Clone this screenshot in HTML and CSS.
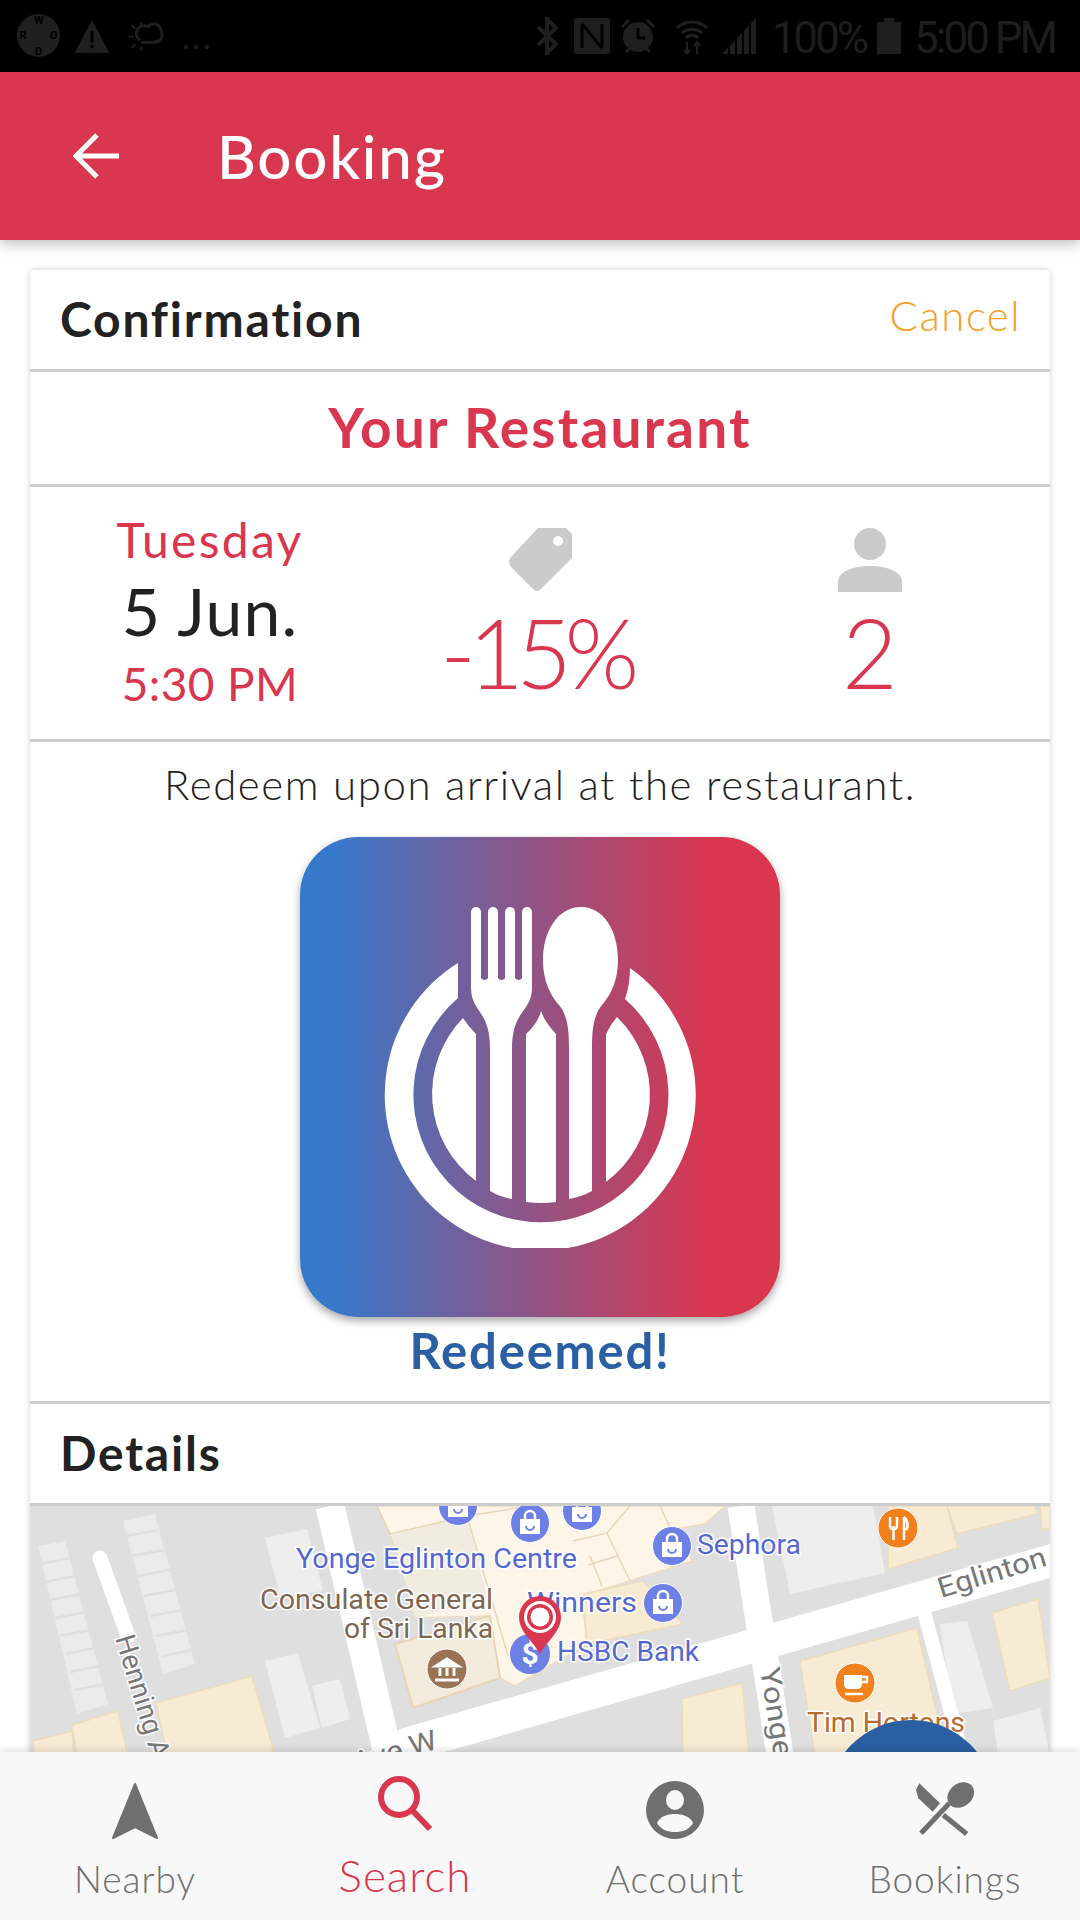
FILE: index.html
```html
<!DOCTYPE html>
<html lang="en">
<head>
<meta charset="utf-8">
<title>Booking</title>
<link rel="stylesheet" href="styles.css">
</head>
<body>
<div class="phone">
  <div class="status">
    <div class="status-group">
      <div class="word-badge"><span>W</span><span>O</span><span>R</span><span>D</span></div>
      <svg class="s-warn" viewBox="0 0 36 34"><path d="M18 0 36 34H0Z" fill="#1f1f1f"/><rect x="16.500" y="11" width="3" height="12" fill="#000"/><rect x="16.500" y="26" width="3" height="3" fill="#000"/></svg>
      <svg class="s-cloud" viewBox="0 0 40 32"><path d="M13 20a8 8 0 0 1 8-14 8 8 0 0 1 14 5c2 8-3 11-9 11H14" fill="none" stroke="#1f1f1f" stroke-width="3"/><path d="M6 16H1M8 8 4 4M8 24l-4 4M14 26v5M14 5V1" stroke="#1f1f1f" stroke-width="2"/></svg>
      <span class="s-dots">...</span>
    </div>
    <div class="status-group right">
      <svg class="s-bt" viewBox="0 0 22 38"><path d="M2 10 20 27 11 36V2l9 9L2 28" fill="none" stroke="#1f1f1f" stroke-width="4"/></svg>
      <svg class="s-nfc" viewBox="0 0 36 36"><rect width="36" height="36" rx="3" fill="#1f1f1f"/><path d="M8 6v24M8 6l20 24M28 6v24" stroke="#000" stroke-width="3" fill="none"/></svg>
      <svg class="s-alarm" viewBox="0 0 36 36"><circle cx="18" cy="19" r="15" fill="#1f1f1f"/><path d="M18 10v10h7" stroke="#000" stroke-width="3" fill="none"/><path d="M2 9 9 2M34 9 27 2M6 34l4-4M30 34l-4-4" stroke="#1f1f1f" stroke-width="3"/></svg>
      <svg class="s-wifi" viewBox="0 0 32 36"><path d="M1 10a22 22 0 0 1 30 0M6 15a15 15 0 0 1 20 0M10 20a8 8 0 0 1 12 0" fill="none" stroke="#1f1f1f" stroke-width="3"/><path d="M11 24v12M8 32l3 4 3-4M21 36V24M18 28l3-4 3 4" fill="none" stroke="#1f1f1f" stroke-width="2"/></svg>
      <svg class="s-signal" viewBox="0 0 34 36"><path d="M0 36 34 0v36Z" fill="#1f1f1f"/><path d="M7 36V26M14 36V18M21 36V10M28 36V2" stroke="#000" stroke-width="2"/></svg>
      <span class="s-text pct">100%</span>
      <svg class="s-batt" viewBox="0 0 24 36"><path d="M0 4h7V0h10v4h7v32H0Z" fill="#1f1f1f"/></svg>
      <span class="s-text clock">5:00 PM</span>
    </div>
  </div>

  <header class="appbar">
    <svg class="back" viewBox="0 0 48 48"><path d="M46 24H4M24 3 3 24l21 21" fill="none" stroke="#fff" stroke-width="5"/></svg>
    <h1 class="title">Booking</h1>
  </header>

  <main class="content">
    <section class="card">
      <div class="row row-head">
        <h2 class="heading">Confirmation</h2>
        <span class="cancel">Cancel</span>
      </div>
      <div class="row row-name">
        <h2 class="restaurant">Your Restaurant</h2>
      </div>
      <div class="row row-info">
        <div class="when">
          <div class="day">Tuesday</div>
          <div class="date">5 Jun.</div>
          <div class="time">5:30 PM</div>
        </div>
        <div class="stat stat-discount">
          <svg class="stat-icon" viewBox="0 0 64 64"><path fill-rule="evenodd" d="M30 0H58L64 6V30L32 62Q29 64 26 62L2 38Q0 34 2 30ZM50 8a5 5 0 1 0 .1 0Z" fill="#cbcbcb"/></svg>
          <div class="stat-value">-15%</div>
        </div>
        <div class="stat stat-people">
          <svg class="stat-icon" viewBox="0 0 64 64"><ellipse cx="32" cy="16" rx="16" ry="16" fill="#cbcbcb"/><path d="M0 64V54C0 43 16 38 32 38S64 43 64 54V64Z" fill="#cbcbcb"/></svg>
          <div class="stat-value">2</div>
        </div>
      </div>
      <div class="row row-redeem">
        <p class="redeem-note">Redeem upon arrival at the restaurant.</p>
        <div class="logo">
          <svg class="logo-art" viewBox="0 0 480 480">
            <defs><clipPath id="plate-clip"><rect width="480" height="411"/></clipPath></defs>
            <g fill="#fff" clip-path="url(#plate-clip)">
              <path d="M158 126A155.500 155.500 0 1 0 330 131Q330 148 325 162A127.500 127.500 0 1 1 158 161Z"/>
              <path d="M163 181Q168 189 176 197V344A108.500 108.500 0 0 1 163 181Z"/>
              <path d="M241 174Q244 184 256 197V365Q241 367 226 365V197Q238 186 241 174Z"/>
              <path d="M317 180Q310 188 306 197V345A108.500 108.500 0 0 0 317 180Z"/>
              <path d="M171 75a5 5 0 0 1 10 0V141a4 4 0 0 0 7 0V75a5 5 0 0 1 10 0V141a4 4 0 0 0 7 0V75a5 5 0 0 1 10 0V141a4 4 0 0 0 7 0V75a5 5 0 0 1 10 0V150C232 176 212 172 212 212V362Q200 360 190 354V212C190 172 171 176 171 150Z"/>
              <path d="M281 70C304 70 318 94 318 123C318 146 309 160 302 168C294 178 292 190 292 212V354Q281 360 269 362V212C269 190 267 178 259 168C252 160 243 146 243 123C243 94 258 70 281 70Z"/>
            </g>
          </svg>
        </div>
        <div class="redeemed">Redeemed!</div>
      </div>
      <div class="row row-details">
        <h2 class="heading">Details</h2>
      </div>
      <div class="map">
        <svg class="map-art" viewBox="0 0 1020 300">
          <defs>
            <g id="bag"><circle r="19.500" fill="#6d80e6" stroke="#fff" stroke-width="1"/><path d="M-10-4H10V11H-10Z" fill="#fff"/><path d="M-5-4V-7a5 5 0 0 1 10 0V-4" fill="none" stroke="#fff" stroke-width="2.500"/><path d="M-4 3a4 4 0 0 0 8 0" fill="none" stroke="#6d80e6" stroke-width="2"/></g>
          </defs>
          <rect width="1020" height="300" fill="#dfdfdf"/>
          <g fill="#eeeeee">
            <path d="M235 32 277 23 293 85 250 90Z"/>
            <path d="M235 155 268 147 290 222 255 232Z"/>
            <path d="M282 180 310 173 320 213 292 222Z"/>
            <path d="M742 0H843L855 67 760 88Z"/>
            <path d="M910 118 937 115 963 202 923 208Z"/>
            <path d="M963 215 1010 202 1020 250 970 260Z"/>
          </g>
          <g fill="#ebebeb">
            <path d="M8 40 35 35 78 198 47 208Z"/>
            <path d="M93 15 125 8 165 158 133 168Z"/>
          </g>
          <g stroke="#dfdfdf" stroke-width="2.500">
            <path d="M10 58 40 52M15 76 45 70M20 94 50 88M25 112 55 106M30 130 60 124M35 148 65 142M40 166 70 160M45 184 75 178"/>
            <path d="M96 30 128 24M102 50 134 44M108 70 140 64M114 90 146 84M120 110 152 104M126 130 158 124M132 150 164 144"/>
          </g>
          <g fill="#f8ebd4" stroke="#ecdcbd" stroke-width="1.500">
            <path d="M3 235 42 225 45 260H5Z"/>
            <path d="M42 219 88 205 100 260H48Z"/>
            <path d="M126 197 222 170 243 242 240 260H140Z"/>
            <path d="M652 193 712 177 720 260H653Z"/>
            <path d="M770 155 887 122 905 200 918 250H785Z"/>
            <path d="M962 107 1008 93 1020 172 980 185Z"/>
            <path d="M858 0H917L928 42 858 63Z"/>
            <path d="M917 0H1005L1007 8 927 28Z"/>
            <path d="M1010 0H1020V22L1012 24Z"/>
          </g>
          <path d="M347 0H695L675 18 650 22 662 55 568 85 552 90 557 138 485 180 470 172 460 110 385 112 365 40Z" fill="#fdf6e8" stroke="#ecdcc0" stroke-width="1.500"/>
          <path d="M362 28 437 10 457 92 385 112Z" fill="#f1ecdf"/>
          <path d="M365 138 460 110 470 172 383 202Z" fill="#f3ecdc" stroke="#e8d5b3" stroke-width="2"/>
          <path d="M553 88 613 75 653 118 557 138Z" fill="#f8ebd4" stroke="#ecdcbd" stroke-width="1.500"/>
          <path d="M347 0 360 28 437 10 500 0M437 10 478 150M543 35 577 27 600 75M558 59 587 50M572 80 560 50M600 0 577 27M630 0 655 55" fill="none" stroke="#e6d6b8" stroke-width="1.500"/>
          <g fill="none" stroke="#fff" stroke-linecap="butt">
            <path d="M300 0 370 300" stroke-width="29"/>
            <path d="M711 0 758 300" stroke-width="27"/>
            <path d="M893 102 930 240" stroke-width="14"/>
          </g>
          <path d="M70 52 98 130" fill="none" stroke="#fff" stroke-width="15" stroke-linecap="round"/>
          <path d="M1020 38V72L411 247 345 265V235L373 222Z" fill="#fff"/>
          <g class="map-label">
            <text class="lb-blue" x="266" y="62" textLength="281" lengthAdjust="spacingAndGlyphs">Yonge Eglinton Centre</text>
            <text class="lb-blue" x="667" y="48" textLength="104" lengthAdjust="spacingAndGlyphs">Sephora</text>
            <text class="lb-brown" x="230" y="103" textLength="233" lengthAdjust="spacingAndGlyphs">Consulate General</text>
            <text class="lb-brown" x="314" y="132" textLength="149" lengthAdjust="spacingAndGlyphs">of Sri Lanka</text>
            <text class="lb-blue" x="497" y="106" textLength="110" lengthAdjust="spacingAndGlyphs">Winners</text>
            <text class="lb-blue" x="527" y="155" textLength="142" lengthAdjust="spacingAndGlyphs">HSBC Bank</text>
            <text class="lb-orange" x="777" y="226" textLength="158" lengthAdjust="spacingAndGlyphs">Tim Hortons</text>
            <text class="lb-gray" transform="translate(911 92) rotate(-17)" textLength="112" lengthAdjust="spacingAndGlyphs">Eglinton</text>
            <text class="lb-gray" transform="translate(730 163) rotate(81)" textLength="90" lengthAdjust="spacingAndGlyphs">Yonge</text>
            <text class="lb-gray" transform="translate(85 132) rotate(73)" textLength="155" lengthAdjust="spacingAndGlyphs">Henning Ave</text>
            <text class="lb-gray" transform="translate(326 266) rotate(-16)" textLength="86" lengthAdjust="spacingAndGlyphs">Ave W</text>
          </g>
          <use href="#bag" x="428" y="0"/>
          <use href="#bag" x="500" y="17"/>
          <use href="#bag" x="552" y="5"/>
          <use href="#bag" x="642" y="40"/>
          <use href="#bag" x="633" y="97"/>
          <g transform="translate(500 148)"><circle r="20" fill="#6d80e6"/><text class="pin-dollar" y="10">$</text></g>
          <g transform="translate(417 163)"><circle r="20" fill="#9a7355" stroke="#fff"/><path d="M-11-3 0-10 11-3ZM-7-1V7M0-1V7M7-1V7M-12 11H12" fill="#fff" stroke="#fff" stroke-width="3"/></g>
          <g transform="translate(868 22)"><circle r="20" fill="#f0811d" stroke="#fff"/><path d="M-8-11V-2a3 3 0 0 0 7 0V-11M-4.500-2V12M6-11V12M6-11Q11-6 9 1H6" fill="none" stroke="#fff" stroke-width="2.500"/></g>
          <g transform="translate(825 177)"><circle r="20" fill="#f0811d" stroke="#fff"/><path d="M-11-8H7V1Q7 6 2 6H-6Q-11 6-11 1Z" fill="#fff"/><path d="M7-6H12V-1H7M-10 11H8" fill="none" stroke="#fff" stroke-width="2.500"/></g>
          <g transform="translate(510 90)">
            <path d="M0 58C-6 46-21 36-21 21A21 21 0 0 1 21 21C21 36 6 46 0 58Z" fill="#d9364f"/>
            <circle cy="21" r="16" fill="#fff"/><circle cy="21" r="13" fill="#d9364f"/><circle cy="21" r="9.500" fill="#fff"/>
          </g>
        </svg>
        <div class="fab"></div>
      </div>
    </section>
  </main>

  <nav class="tabs">
    <div class="tab">
      <svg class="tab-icon" viewBox="0 0 60 60"><path d="M30 4 52 58 30 47 8 58Z" fill="#6f6f6f" stroke="#6f6f6f" stroke-linejoin="round" stroke-width="2"/></svg>
      <span class="tab-label">Nearby</span>
    </div>
    <div class="tab active">
      <svg class="tab-icon" viewBox="0 0 60 60"><circle cx="24" cy="23" r="18" fill="none" stroke="#d9364f" stroke-width="6"/><path d="M37 36 55 55" stroke="#d9364f" stroke-width="6"/></svg>
      <span class="tab-label">Search</span>
    </div>
    <div class="tab">
      <svg class="tab-icon" viewBox="0 0 60 60"><circle cx="30" cy="30" r="29" fill="#6f6f6f"/><ellipse cx="30" cy="20" rx="9" ry="10" fill="#f8f8f8"/><path d="M12 43C15 36 23 34 30 34S45 36 48 43C44 50 37 52 30 52S16 50 12 43Z" fill="#f8f8f8"/></svg>
      <span class="tab-label">Account</span>
    </div>
    <div class="tab">
      <svg class="tab-icon" viewBox="0 0 60 60"><path d="M4.300 3.300 25 23.300 17.700 31.700 3.300 18.300 1 10Z" fill="#6f6f6f"/><path d="M28.300 35 51.700 54M34.300 23.300 6 53.300" stroke="#6f6f6f" stroke-width="5" fill="none"/><ellipse cx="45.700" cy="15" rx="14.500" ry="11.500" transform="rotate(-40 45.700 15)" fill="#6f6f6f"/></svg>
      <span class="tab-label">Bookings</span>
    </div>
  </nav>
</div>
</body>
</html>
```
FILE: styles.css
```css
* { box-sizing: border-box; }
html, body { margin: 0; padding: 0; }
body { font-family: "Lato", "Noto Sans", sans-serif; background: #fff; }
h1, h2, p { margin: 0; font: inherit; }

.phone { width: 1080px; height: 1920px; display: flex; flex-direction: column; overflow: hidden; background: #fff; }

/* status bar */
.status { height: 72px; flex: none; background: #000; display: flex; justify-content: space-between; align-items: center; padding: 0 25px 0 17px; }
.status-group { display: flex; align-items: center; height: 100%; }
.word-badge { width: 43px; height: 43px; border-radius: 50%; background: #1f1f1f; display: grid; grid-template-columns: 1fr 1fr; place-items: center; font: 700 11px "Roboto", sans-serif; color: #000; transform: rotate(45deg); margin-right: 14px; margin-top: -1px; }
.word-badge span { transform: rotate(-45deg); }
.s-warn { width: 36px; height: 33px; margin-right: 17px; }
.s-cloud { width: 40px; height: 31px; margin-right: 15px; }
.s-dots { font: 700 26px "Roboto", sans-serif; color: #1f1f1f; letter-spacing: 3px; margin-top: 8px; }
.s-bt { width: 22px; height: 38px; margin-right: 16px; }
.s-nfc { width: 36px; height: 36px; margin-right: 10px; }
.s-alarm { width: 36px; height: 36px; margin-right: 20px; }
.s-wifi { width: 32px; height: 36px; margin-right: 14px; }
.s-signal { width: 34px; height: 36px; margin-right: 16px; }
.s-text { font: 400 44px/1 "Roboto", sans-serif; color: #1d1d1d; letter-spacing: -3px; margin-top: 3px; }
.s-batt { width: 24px; height: 36px; margin: 0 13px 0 11px; }

/* app bar */
.appbar { height: 168px; flex: none; background: #d9364f; display: flex; align-items: center; padding-left: 73px; position: relative; z-index: 2; box-shadow: 0 4px 12px rgba(0,0,0,.25); }
.back { width: 48px; height: 48px; margin-right: 96px; margin-top: -1px; }
.title { font-size: 60px; font-weight: 500; color: #fff; letter-spacing: 1.800px; }

/* card */
.content { flex: 1; min-height: 0; overflow: hidden; padding: 30px 30px 0; }
.card { background: #fff; border-radius: 3px; box-shadow: 0 0 6px rgba(0,0,0,.18); }
.row { border-bottom: 3px solid #cdcdcd; }
.row-head { height: 102px; display: flex; justify-content: space-between; align-items: center; padding: 0 30px; }
.heading { font-size: 48px; font-weight: 700; color: #222; letter-spacing: 1.800px; margin-top: -3px; }
.cancel { font-size: 42px; font-weight: 300; color: #f5a01f; margin-top: -10px; letter-spacing: 1.500px; margin-right: -1px; }
.row-name { height: 115px; display: flex; align-items: center; justify-content: center; }
.restaurant { font-size: 55px; font-weight: 700; color: #d9364f; letter-spacing: 2.200px; margin-top: -3px; }
.row-info { height: 255px; display: grid; grid-template-columns: 330px 330px 330px; padding-left: 15px; }
.when { display: flex; flex-direction: column; align-items: center; padding-top: 22px; }
.day { font-size: 48px; line-height: 62px; color: #d9364f; letter-spacing: 2.300px; }
.date { font-size: 66px; line-height: 70px; color: #222; letter-spacing: 1.200px; margin-top: 5px; }
.time { font-size: 46px; line-height: 66px; color: #d9364f; letter-spacing: .4px; margin-top: 5px; }
.stat { display: flex; flex-direction: column; align-items: center; padding-top: 41px; }
.stat-icon { width: 64px; height: 64px; }
.stat-value { font-size: 96px; line-height: 116px; color: #d9364f; font-weight: 300; letter-spacing: -7.500px; margin: 2px 8px 0 0; }
.row-redeem { height: 662px; display: flex; flex-direction: column; align-items: center; padding-top: 17px; }
.redeem-note { font-size: 42px; line-height: 50px; font-weight: 300; color: #222; letter-spacing: 1.550px; }
.logo { width: 480px; height: 480px; margin-top: 28px; flex: none; border-radius: 58px; background: linear-gradient(to right, #3679cb 6%, #7f5b92 40%, #d9364f 85%); box-shadow: 0 4px 8px rgba(0,0,0,.35); }
.logo-art { display: block; width: 480px; height: 480px; }
.redeemed { font-size: 49px; line-height: 66px; font-weight: 700; color: #2a5fa3; letter-spacing: 1.800px; }
.row-details { height: 102px; display: flex; align-items: center; padding: 0 30px; }

/* map */
.map { position: relative; height: 300px; overflow: hidden; }
.map-art { display: block; width: 1020px; height: 300px; }
.map-label text { font-family: "Roboto", sans-serif; font-size: 28px; paint-order: stroke; stroke: #fff; stroke-width: 3px; }
.lb-blue { fill: #5567d1; }
.lb-brown { fill: #7d6652; }
.lb-orange { fill: #b86b2f; }
.lb-gray { fill: #777; }
.pin-dollar { font: 700 30px "Roboto", sans-serif; fill: #fff; text-anchor: middle; }
.fab { position: absolute; left: 797px; top: 214px; width: 168px; height: 168px; border-radius: 50%; background: #2a5fa3; }

/* tabs */
.tabs { height: 168px; flex: none; background: #f8f8f8; display: grid; grid-template-columns: 270px 270px 270px 270px; position: relative; z-index: 2; box-shadow: 0 -3px 6px rgba(0,0,0,.1); }
.tab { display: flex; flex-direction: column; align-items: center; padding-top: 28px; color: #6f6f6f; }
.tab-icon { width: 60px; height: 60px; }
.tab-label { font-size: 37px; font-weight: 300; line-height: 50px; margin-top: 14px; letter-spacing: 1px; }
.tab.active { color: #d9364f; padding-top: 22px; }
.tab.active .tab-label { font-size: 44px; margin-top: 16px; }
```
